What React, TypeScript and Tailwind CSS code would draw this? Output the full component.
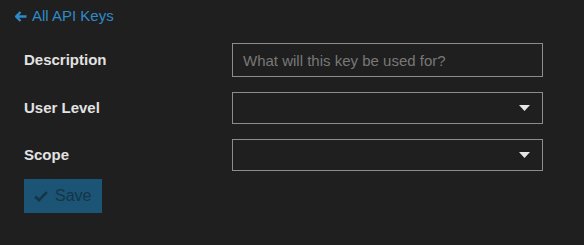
import React from 'react';

const FIELDS = [
  { label: 'Description', kind: 'text', placeholder: 'What will this key be used for?' },
  { label: 'User Level', kind: 'select' },
  { label: 'Scope', kind: 'select' },
];

function Caret() {
  return (
    <svg width="11" height="7" viewBox="0 0 11 7" className="absolute right-[13px] top-1/2 -translate-y-1/2">
      <path d="M0 0.5 H11 L5.5 6.5 Z" fill="#e6e6e6" />
    </svg>
  );
}

export default function App() {
  return (
    <div className="min-h-[245px] w-[584px] bg-[#1f1f1f] font-['Liberation_Sans',Arial,sans-serif]">
      <div className="pl-[15px] pt-[8px]">
        <a href="#" className="flex items-center gap-[5px] text-[15px] leading-[16px] text-[#2e8bc9]">
          <svg width="12" height="11" viewBox="0 0 12 11">
            <path d="M5.5 1 L1.2 5.5 L5.5 10 M1.5 5.5 H11.5" stroke="#2e8bc9" strokeWidth="2.3" fill="none" strokeLinejoin="miter" />
          </svg>
          All API Keys
        </a>
      </div>

      <form className="flex flex-col gap-[15px] pl-[24px] pr-[41px] pt-[19px]">
        {FIELDS.map((f) => (
          <div key={f.label} className="flex items-center">
            <label className="w-[208px] text-[15px] font-bold text-[#e2e2e2]">{f.label}</label>
            <div className="relative flex-1">
              {f.kind === 'text' ? (
                <input
                  placeholder={f.placeholder}
                  className="h-[34px] w-full border border-[#8c8c8c] bg-[#1f1f1f] px-[10px] text-[15px] text-[#ddd] placeholder:text-[#787878] outline-none"
                />
              ) : (
                <>
                  <div className="h-[32px] w-full border border-[#8c8c8c] bg-[#1f1f1f]" />
                  <Caret />
                </>
              )}
            </div>
          </div>
        ))}
      </form>

      <div className="pl-[24px] pt-[8px]">
        <button
          type="button"
          className="flex h-[34px] w-[78px] items-center gap-[7px] bg-[#1b5474] pl-[10px] text-[16px] text-[#153549]"
        >
          <svg width="14" height="11" viewBox="0 0 14 11">
            <path d="M1.2 5.5 L5 9.2 L12.8 1.2" stroke="#153549" strokeWidth="2.6" fill="none" />
          </svg>
          Save
        </button>
      </div>
    </div>
  );
}
